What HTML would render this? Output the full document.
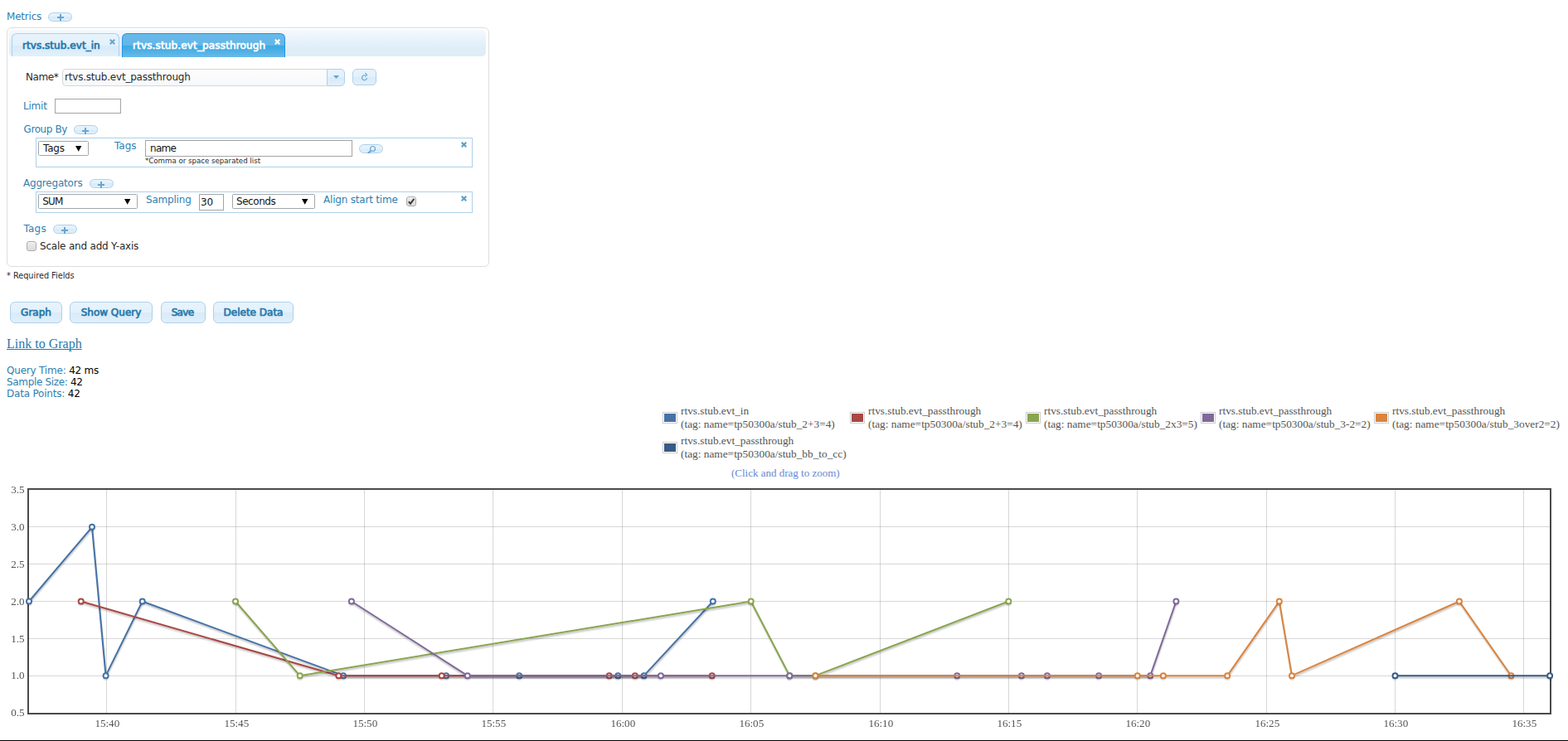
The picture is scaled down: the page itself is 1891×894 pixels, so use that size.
<!DOCTYPE html>
<html lang="en">
<head>
<meta charset="utf-8">
<title>KairosDB</title>
<style>
html,body{margin:0;padding:0;background:#fff;}
body{width:1891px;height:894px;position:relative;overflow:hidden;font-family:"DejaVu Sans","Liberation Sans",sans-serif;font-size:12px;letter-spacing:-0.2px;line-height:14px;color:#222;}
.a{position:absolute;white-space:nowrap;}
.lb{color:#2f7fb0;}
.dk{color:#2a2a2a;}
.b{font-family:"DejaVu Sans","Liberation Sans",sans-serif;font-weight:normal;font-size:12px;letter-spacing:0;-webkit-text-stroke:0.7px currentColor;}
.panel{position:absolute;left:8px;top:33px;width:580px;height:287px;border:1px solid #ddd;border-radius:6px;background:#fff;}
.tabnav{position:absolute;left:11px;top:36px;width:575px;height:32px;border-radius:5px;background:linear-gradient(#f4f9fd 0%,#e6f1fa 45%,#deedf7 75%,#deedf7 100%);}
.tab{position:absolute;top:40px;height:27px;border:1px solid #aed0ea;border-bottom:0;border-radius:6px 6px 0 0;background:linear-gradient(#e7f3fc 0,#e3f1fb 50%,#d9ebf9 50%,#dbecf9 70%,#e2f0fa 100%);color:#2779aa;}
.tab.on{border-color:#2694e8;background:linear-gradient(#69b9e9 0,#64b6e8 50%,#3ba9e2 50%,#42ace3 62%,#6abae9 100%);color:#fff;height:28px;}
.tab span{position:absolute;top:7px;font-size:12px;letter-spacing:0.15px;}
.pill{position:absolute;width:27px;height:9px;border:1px solid #aed0ea;border-radius:6px;background:linear-gradient(#e7f3fc 0,#e3f1fb 50%,#d9ebf9 50%,#dbecf9 70%,#e2f0fa 100%);}
.pill svg{position:absolute;left:0;top:0;}
.btn{position:absolute;top:364px;height:24px;border:1px solid #aed0ea;border-radius:6px;background:linear-gradient(#e7f3fc 0,#e3f1fb 50%,#d9ebf9 50%,#dbecf9 70%,#e2f0fa 100%);color:#2779aa;text-align:center;line-height:24px;}
.box{position:absolute;left:43px;width:525px;border:1px solid #aed0ea;background:#fff;}
.inp{position:absolute;border:1px solid #a4a4a4;background:#fff;box-sizing:border-box;color:#141414;}
.sel{position:absolute;border-radius:1.5px;border:1px solid #a6a6a6;background:#fff;box-sizing:border-box;color:#141414;height:18px;}
.cb{position:absolute;width:10px;height:10px;border:1px solid #ababab;border-radius:3px;background:linear-gradient(#ebebeb,#dddddd);box-shadow:inset 0 1px 0 rgba(255,255,255,.6);}
.lg{letter-spacing:0;position:absolute;font-family:"Liberation Serif","DejaVu Serif",serif;font-size:13.33px;line-height:16px;color:#545454;white-space:nowrap;}
.sw{position:absolute;width:14px;height:10px;padding:1px;border:1px solid #ccc;background:#fff;}
.sw b{display:block;width:14px;height:10px;}
#chart{position:absolute;left:0;top:580px;will-change:transform;}
#chart text{letter-spacing:0;font-family:"Liberation Serif","DejaVu Serif",serif;font-size:13.1px;fill:#545454;}
</style>
</head>
<body>

<!-- Metrics header -->
<span class="a lb" style="left:8px;top:13px;">Metrics</span>
<div class="pill" style="left:58px;top:15px;"><svg width="27" height="9" viewBox="0 0 27 9"><path d="M10 4h8v2h-8z M13 1h2v8h-2z" fill="#68a6d1"/></svg></div>

<!-- Tabs panel -->
<div class="panel"></div>
<div class="tabnav"></div>
<div class="tab" style="left:14px;width:128px;"><span class="b" style="left:12px;letter-spacing:0.05px;">rtvs.stub.evt_in</span>
 <svg class="a" style="left:117px;top:6px;" width="7" height="7" viewBox="0 0 7 7"><path d="M1.5 0 3.5 2 5.5 0 7 1.5 5 3.5 7 5.5 5.5 7 3.5 5 1.5 7 0 5.5 2 3.5 0 1.5z" fill="#6aa6cf"/></svg></div>
<div class="tab on" style="left:147px;width:195px;"><span class="b" style="left:12px;">rtvs.stub.evt_passthrough</span>
 <svg class="a" style="left:183px;top:6px;" width="7" height="7" viewBox="0 0 7 7"><path d="M1.5 0 3.5 2 5.5 0 7 1.5 5 3.5 7 5.5 5.5 7 3.5 5 1.5 7 0 5.5 2 3.5 0 1.5z" fill="#fff"/></svg></div>

<!-- Name row -->
<span class="a dk" style="left:31px;top:86px;letter-spacing:-0.4px;">Name*</span>
<div class="a" style="left:75px;top:83px;width:318px;height:19px;border:1px solid #d6d6d6;border-right:0;border-radius:5px 0 0 5px;background:linear-gradient(#fdfdfe,#f6f8fa);"><span class="a dk" style="left:2px;top:2px;">rtvs.stub.evt_passthrough</span></div>
<div class="a" style="left:394px;top:83px;width:20px;height:19px;border:1px solid #aed0ea;border-radius:0 5px 5px 0;background:linear-gradient(#e7f3fc 0,#e3f1fb 50%,#d9ebf9 50%,#dbecf9 70%,#e2f0fa 100%);"><svg class="a" style="left:7px;top:7px;" width="7" height="4" viewBox="0 0 7 4"><path d="M0 0h7L3.5 4z" fill="#62a5d0"/></svg></div>
<div class="a" style="left:425px;top:83px;width:27px;height:18px;border:1px solid #aed0ea;border-radius:5px;background:linear-gradient(#e7f3fc 0,#e3f1fb 50%,#d9ebf9 50%,#dbecf9 70%,#e2f0fa 100%);"><svg class="a" style="left:9px;top:3px;" width="9" height="11" viewBox="0 0 9 11"><path d="M5.2 3.8A3 3 0 1 0 7.5 7.2" fill="none" stroke="#62a5d0" stroke-width="1.1"/><path d="M5.2 1.2 7.6 3.4 5 5.4" fill="none" stroke="#62a5d0" stroke-width="1.1"/></svg></div>

<!-- Limit -->
<span class="a lb" style="left:28px;top:121px;">Limit</span>
<div class="inp" style="left:66px;top:119px;width:80px;height:18px;"></div>

<!-- Group by -->
<span class="a lb" style="left:28.5px;top:149px;letter-spacing:-0.4px;">Group By</span>
<div class="pill" style="left:89px;top:151px;"><svg width="27" height="10" viewBox="0 0 27 10"><path d="M9 5h8v2h-8z M12 2h2v8h-2z" fill="#68a6d1"/></svg></div>
<div class="box" style="top:166px;height:34px;"></div>
<div class="sel" style="left:46px;top:170px;width:61px;"><span class="a" style="left:5px;top:1px;">Tags</span><svg class="a" style="left:44px;top:5px;" width="8" height="7" viewBox="0 0 8 7"><path d="M0 0h7.4L3.7 6.8z" fill="#000"/></svg></div>
<span class="a lb" style="left:138px;top:169px;letter-spacing:0;">Tags</span>
<div class="inp" style="left:175px;top:169px;width:250px;height:20px;"><span class="a" style="left:5px;top:2px;letter-spacing:-0.7px;">name</span></div>
<span class="a dk" style="left:175px;top:187px;font-size:8.65px;letter-spacing:0;">*Comma or space separated list</span>
<div class="pill" style="left:433px;top:174px;"><svg width="27" height="10" viewBox="0 0 27 10"><circle cx="15.5" cy="4.5" r="3" fill="none" stroke="#62a5d0" stroke-width="1.1"/><path d="M13 7 9.6 10.4" stroke="#62a5d0" stroke-width="2" fill="none"/></svg></div>
<svg class="a" style="left:556px;top:171px;" width="7" height="7" viewBox="0 0 7 7"><path d="M1.5 0 3.5 2 5.5 0 7 1.5 5 3.5 7 5.5 5.5 7 3.5 5 1.5 7 0 5.5 2 3.5 0 1.5z" fill="#5b9fc9"/></svg>

<!-- Aggregators -->
<span class="a lb" style="left:28px;top:214px;">Aggregators</span>
<div class="pill" style="left:108px;top:216px;"><svg width="27" height="10" viewBox="0 0 27 10"><path d="M9 5h8v2h-8z M12 2h2v8h-2z" fill="#68a6d1"/></svg></div>
<div class="box" style="top:231px;height:24px;"></div>
<div class="sel" style="left:46px;top:234px;width:120px;"><span class="a" style="left:4.3px;top:1px;letter-spacing:-0.8px;">SUM</span><svg class="a" style="left:103px;top:5px;" width="8" height="7" viewBox="0 0 8 7"><path d="M0 0h7.4L3.7 6.8z" fill="#000"/></svg></div>
<span class="a lb" style="left:176px;top:234px;">Sampling</span>
<div class="inp" style="left:240px;top:234px;width:30px;height:20px;"><span class="a" style="left:1px;top:2px;">30</span></div>
<div class="sel" style="left:280px;top:234px;width:100px;"><span class="a" style="left:4px;top:1px;letter-spacing:-0.45px;">Seconds</span><svg class="a" style="left:83px;top:5px;" width="8" height="7" viewBox="0 0 8 7"><path d="M0 0h7.4L3.7 6.8z" fill="#000"/></svg></div>
<span class="a lb" style="left:390px;top:234px;">Align start time</span>
<div class="cb" style="left:490px;top:237px;"><svg class="a" style="left:0;top:0;" width="10" height="10" viewBox="0 0 10 10"><path d="M1.8 5.2 4 7.6 8.4 1.8" fill="none" stroke="#3c3c3c" stroke-width="2"/></svg></div>
<svg class="a" style="left:556px;top:236px;" width="7" height="7" viewBox="0 0 7 7"><path d="M1.5 0 3.5 2 5.5 0 7 1.5 5 3.5 7 5.5 5.5 7 3.5 5 1.5 7 0 5.5 2 3.5 0 1.5z" fill="#5b9fc9"/></svg>

<!-- Tags -->
<span class="a lb" style="left:28.5px;top:269px;letter-spacing:0.2px;">Tags</span>
<div class="pill" style="left:64px;top:271px;"><svg width="27" height="10" viewBox="0 0 27 10"><path d="M9 5h8v2h-8z M12 2h2v8h-2z" fill="#68a6d1"/></svg></div>
<div class="cb" style="left:32px;top:291px;"></div>
<span class="a dk" style="left:48px;top:290px;">Scale and add Y-axis</span>

<span class="a dk" style="left:8px;top:326px;font-size:9.7px;letter-spacing:0;">* Required Fields</span>

<!-- Buttons -->
<div class="btn b" style="left:12px;width:61px;">Graph</div>
<div class="btn b" style="left:84px;width:98px;">Show Query</div>
<div class="btn b" style="left:194px;width:50px;padding-right:2px;letter-spacing:-0.7px;">Save</div>
<div class="btn b" style="left:257px;width:95px;">Delete Data</div>

<a class="a" style="left:8px;top:406px;font-family:'Liberation Serif','DejaVu Serif',serif;font-size:16px;letter-spacing:0;line-height:18px;color:#2779aa;text-decoration:underline;text-underline-offset:1px;text-decoration-skip-ink:none;text-decoration-thickness:1px;">Link to Graph</a>

<span class="a" style="left:8px;top:440px;"><span class="lb">Query Time:</span> <span style="color:#000">42 ms</span></span>
<span class="a" style="left:8px;top:454px;letter-spacing:-0.34px;"><span class="lb">Sample Size:</span> <span style="color:#000">42</span></span>
<span class="a" style="left:8px;top:468px;"><span class="lb">Data Points:</span> <span style="color:#000">42</span></span>

<!-- Legend -->
<div class="sw" style="left:799px;top:497px;"><b style="background:#4572a7"></b></div>
<div class="lg" style="left:821px;top:488px;">rtvs.stub.evt_in<br>(tag: name=tp50300a/stub_2+3=4)</div>
<div class="sw" style="left:1025px;top:497px;"><b style="background:#aa4643"></b></div>
<div class="lg" style="left:1047px;top:488px;">rtvs.stub.evt_passthrough<br>(tag: name=tp50300a/stub_2+3=4)</div>
<div class="sw" style="left:1237px;top:497px;"><b style="background:#89a54e"></b></div>
<div class="lg" style="left:1259px;top:488px;">rtvs.stub.evt_passthrough<br>(tag: name=tp50300a/stub_2x3=5)</div>
<div class="sw" style="left:1448px;top:497px;"><b style="background:#80699b"></b></div>
<div class="lg" style="left:1470px;top:488px;">rtvs.stub.evt_passthrough<br>(tag: name=tp50300a/stub_3-2=2)</div>
<div class="sw" style="left:1657px;top:497px;"><b style="background:#db843d"></b></div>
<div class="lg" style="left:1679px;top:488px;">rtvs.stub.evt_passthrough<br>(tag: name=tp50300a/stub_3over2=2)</div>
<div class="sw" style="left:799px;top:533px;"><b style="background:#375b86"></b></div>
<div class="lg" style="left:821px;top:524px;">rtvs.stub.evt_passthrough<br>(tag: name=tp50300a/stub_bb_to_cc)</div>
<span class="a" style="left:882px;top:563px;font-family:'Liberation Serif','DejaVu Serif',serif;font-size:13px;letter-spacing:0;line-height:16px;color:#6688d0;">(Click and drag to zoom)</span>

<!-- Chart -->
<svg id="chart" width="1891" height="313" viewBox="0 580 1891 313">
<g fill="none" stroke="#545454" stroke-opacity="0.23" stroke-width="1" shape-rendering="crispEdges">
<path d="M128.5 591 V860"/>
<path d="M284.5 591 V860"/>
<path d="M439.5 591 V860"/>
<path d="M594.5 591 V860"/>
<path d="M750.5 591 V860"/>
<path d="M905.5 591 V860"/>
<path d="M1061.5 591 V860"/>
<path d="M1216.5 591 V860"/>
<path d="M1371.5 591 V860"/>
<path d="M1527.5 591 V860"/>
<path d="M1682.5 591 V860"/>
<path d="M1837.5 591 V860"/>
<path d="M35 635.5 H1869"/>
<path d="M35 680.5 H1869"/>
<path d="M35 725.5 H1869"/>
<path d="M35 770.5 H1869"/>
<path d="M35 815.5 H1869"/>
</g>
<rect x="34" y="590" width="1836" height="271" fill="none" stroke="#4a4a4a" stroke-width="2" shape-rendering="crispEdges"/>
<text x="129.3" y="877" text-anchor="middle">15:40</text>
<text x="285.3" y="877" text-anchor="middle">15:45</text>
<text x="440.3" y="877" text-anchor="middle">15:50</text>
<text x="595.3" y="877" text-anchor="middle">15:55</text>
<text x="751.3" y="877" text-anchor="middle">16:00</text>
<text x="906.3" y="877" text-anchor="middle">16:05</text>
<text x="1062.3" y="877" text-anchor="middle">16:10</text>
<text x="1217.3" y="877" text-anchor="middle">16:15</text>
<text x="1372.3" y="877" text-anchor="middle">16:20</text>
<text x="1528.3" y="877" text-anchor="middle">16:25</text>
<text x="1683.3" y="877" text-anchor="middle">16:30</text>
<text x="1838.3" y="877" text-anchor="middle">16:35</text>
<text x="29.5" y="595.2" text-anchor="end">3.5</text>
<text x="29.5" y="640.0" text-anchor="end">3.0</text>
<text x="29.5" y="684.9" text-anchor="end">2.5</text>
<text x="29.5" y="729.7" text-anchor="end">2.0</text>
<text x="29.5" y="774.5" text-anchor="end">1.5</text>
<text x="29.5" y="819.4" text-anchor="end">1.0</text>
<text x="29.5" y="864.2" text-anchor="end">0.5</text>
<g fill="none" stroke-linejoin="round">
<path d="M35.43 727.96 L111.43 638.30 L128.03 817.63 L172.13 727.96 L414.43 817.63 L538.53 817.63 L626.63 817.63 L745.73 817.63 L777.03 817.63 L860.23 727.96" stroke="#000" stroke-opacity="0.1" stroke-width="3"/>
<path d="M35.30 727.22 L111.30 637.56 L127.90 816.89 L172.00 727.22 L414.30 816.89 L538.40 816.89 L626.50 816.89 L745.60 816.89 L776.90 816.89 L860.10 727.22" stroke="#000" stroke-opacity="0.1" stroke-width="1.5"/>
<path d="M35.00 725.50 L111.00 635.83 L127.60 815.17 L171.70 725.50 L414.00 815.17 L538.10 815.17 L626.20 815.17 L745.30 815.17 L776.60 815.17 L859.80 725.50" stroke="#4572a7" stroke-width="2"/>
<path d="M38.00 727.75 A3 3 0 0 1 32.00 727.75 M114.00 638.08 A3 3 0 0 1 108.00 638.08 M130.60 817.42 A3 3 0 0 1 124.60 817.42 M174.70 727.75 A3 3 0 0 1 168.70 727.75 M417.00 817.42 A3 3 0 0 1 411.00 817.42 M541.10 817.42 A3 3 0 0 1 535.10 817.42 M629.20 817.42 A3 3 0 0 1 623.20 817.42 M748.30 817.42 A3 3 0 0 1 742.30 817.42 M779.60 817.42 A3 3 0 0 1 773.60 817.42 M862.80 727.75 A3 3 0 0 1 856.80 727.75" stroke="#000" stroke-opacity="0.1" stroke-width="1.5"/>
<path d="M38.00 726.25 A3 3 0 0 1 32.00 726.25 M114.00 636.58 A3 3 0 0 1 108.00 636.58 M130.60 815.92 A3 3 0 0 1 124.60 815.92 M174.70 726.25 A3 3 0 0 1 168.70 726.25 M417.00 815.92 A3 3 0 0 1 411.00 815.92 M541.10 815.92 A3 3 0 0 1 535.10 815.92 M629.20 815.92 A3 3 0 0 1 623.20 815.92 M748.30 815.92 A3 3 0 0 1 742.30 815.92 M779.60 815.92 A3 3 0 0 1 773.60 815.92 M862.80 726.25 A3 3 0 0 1 856.80 726.25" stroke="#000" stroke-opacity="0.2" stroke-width="1.5"/>
</g>
<g fill="#fff" stroke="#4572a7" stroke-width="2">
<circle cx="35.00" cy="725.50" r="3"/>
<circle cx="111.00" cy="635.83" r="3"/>
<circle cx="127.60" cy="815.17" r="3"/>
<circle cx="171.70" cy="725.50" r="3"/>
<circle cx="414.00" cy="815.17" r="3"/>
<circle cx="538.10" cy="815.17" r="3"/>
<circle cx="626.20" cy="815.17" r="3"/>
<circle cx="745.30" cy="815.17" r="3"/>
<circle cx="776.60" cy="815.17" r="3"/>
<circle cx="859.80" cy="725.50" r="3"/>
</g>
<g fill="none" stroke-linejoin="round">
<path d="M98.13 727.96 L408.83 817.63 L533.13 817.63 L735.13 817.63 L766.23 817.63 L859.13 817.63" stroke="#000" stroke-opacity="0.1" stroke-width="3"/>
<path d="M98.00 727.22 L408.70 816.89 L533.00 816.89 L735.00 816.89 L766.10 816.89 L859.00 816.89" stroke="#000" stroke-opacity="0.1" stroke-width="1.5"/>
<path d="M97.70 725.50 L408.40 815.17 L532.70 815.17 L734.70 815.17 L765.80 815.17 L858.70 815.17" stroke="#aa4643" stroke-width="2"/>
<path d="M100.70 727.75 A3 3 0 0 1 94.70 727.75 M411.40 817.42 A3 3 0 0 1 405.40 817.42 M535.70 817.42 A3 3 0 0 1 529.70 817.42 M737.70 817.42 A3 3 0 0 1 731.70 817.42 M768.80 817.42 A3 3 0 0 1 762.80 817.42 M861.70 817.42 A3 3 0 0 1 855.70 817.42" stroke="#000" stroke-opacity="0.1" stroke-width="1.5"/>
<path d="M100.70 726.25 A3 3 0 0 1 94.70 726.25 M411.40 815.92 A3 3 0 0 1 405.40 815.92 M535.70 815.92 A3 3 0 0 1 529.70 815.92 M737.70 815.92 A3 3 0 0 1 731.70 815.92 M768.80 815.92 A3 3 0 0 1 762.80 815.92 M861.70 815.92 A3 3 0 0 1 855.70 815.92" stroke="#000" stroke-opacity="0.2" stroke-width="1.5"/>
</g>
<g fill="#fff" stroke="#aa4643" stroke-width="2">
<circle cx="97.70" cy="725.50" r="3"/>
<circle cx="408.40" cy="815.17" r="3"/>
<circle cx="532.70" cy="815.17" r="3"/>
<circle cx="734.70" cy="815.17" r="3"/>
<circle cx="765.80" cy="815.17" r="3"/>
<circle cx="858.70" cy="815.17" r="3"/>
</g>
<g fill="none" stroke-linejoin="round">
<path d="M284.43 727.96 L362.13 817.63 L906.13 727.96 L952.73 817.63 L983.83 817.63 L1216.73 727.96" stroke="#000" stroke-opacity="0.1" stroke-width="3"/>
<path d="M284.30 727.22 L362.00 816.89 L906.00 727.22 L952.60 816.89 L983.70 816.89 L1216.60 727.22" stroke="#000" stroke-opacity="0.1" stroke-width="1.5"/>
<path d="M284.00 725.50 L361.70 815.17 L905.70 725.50 L952.30 815.17 L983.40 815.17 L1216.30 725.50" stroke="#89a54e" stroke-width="2"/>
<path d="M287.00 727.75 A3 3 0 0 1 281.00 727.75 M364.70 817.42 A3 3 0 0 1 358.70 817.42 M908.70 727.75 A3 3 0 0 1 902.70 727.75 M955.30 817.42 A3 3 0 0 1 949.30 817.42 M986.40 817.42 A3 3 0 0 1 980.40 817.42 M1219.30 727.75 A3 3 0 0 1 1213.30 727.75" stroke="#000" stroke-opacity="0.1" stroke-width="1.5"/>
<path d="M287.00 726.25 A3 3 0 0 1 281.00 726.25 M364.70 815.92 A3 3 0 0 1 358.70 815.92 M908.70 726.25 A3 3 0 0 1 902.70 726.25 M955.30 815.92 A3 3 0 0 1 949.30 815.92 M986.40 815.92 A3 3 0 0 1 980.40 815.92 M1219.30 726.25 A3 3 0 0 1 1213.30 726.25" stroke="#000" stroke-opacity="0.2" stroke-width="1.5"/>
</g>
<g fill="#fff" stroke="#89a54e" stroke-width="2">
<circle cx="284.00" cy="725.50" r="3"/>
<circle cx="361.70" cy="815.17" r="3"/>
<circle cx="905.70" cy="725.50" r="3"/>
<circle cx="952.30" cy="815.17" r="3"/>
<circle cx="983.40" cy="815.17" r="3"/>
<circle cx="1216.30" cy="725.50" r="3"/>
</g>
<g fill="none" stroke-linejoin="round">
<path d="M424.33 727.96 L564.23 817.63 L797.33 817.63 L952.73 817.63 L1154.63 817.63 L1232.33 817.63 L1263.33 817.63 L1325.53 817.63 L1387.73 817.63 L1418.83 727.96" stroke="#000" stroke-opacity="0.1" stroke-width="3"/>
<path d="M424.20 727.22 L564.10 816.89 L797.20 816.89 L952.60 816.89 L1154.50 816.89 L1232.20 816.89 L1263.20 816.89 L1325.40 816.89 L1387.60 816.89 L1418.70 727.22" stroke="#000" stroke-opacity="0.1" stroke-width="1.5"/>
<path d="M423.90 725.50 L563.80 815.17 L796.90 815.17 L952.30 815.17 L1154.20 815.17 L1231.90 815.17 L1262.90 815.17 L1325.10 815.17 L1387.30 815.17 L1418.40 725.50" stroke="#80699b" stroke-width="2"/>
<path d="M426.90 727.75 A3 3 0 0 1 420.90 727.75 M566.80 817.42 A3 3 0 0 1 560.80 817.42 M799.90 817.42 A3 3 0 0 1 793.90 817.42 M955.30 817.42 A3 3 0 0 1 949.30 817.42 M1157.20 817.42 A3 3 0 0 1 1151.20 817.42 M1234.90 817.42 A3 3 0 0 1 1228.90 817.42 M1265.90 817.42 A3 3 0 0 1 1259.90 817.42 M1328.10 817.42 A3 3 0 0 1 1322.10 817.42 M1390.30 817.42 A3 3 0 0 1 1384.30 817.42 M1421.40 727.75 A3 3 0 0 1 1415.40 727.75" stroke="#000" stroke-opacity="0.1" stroke-width="1.5"/>
<path d="M426.90 726.25 A3 3 0 0 1 420.90 726.25 M566.80 815.92 A3 3 0 0 1 560.80 815.92 M799.90 815.92 A3 3 0 0 1 793.90 815.92 M955.30 815.92 A3 3 0 0 1 949.30 815.92 M1157.20 815.92 A3 3 0 0 1 1151.20 815.92 M1234.90 815.92 A3 3 0 0 1 1228.90 815.92 M1265.90 815.92 A3 3 0 0 1 1259.90 815.92 M1328.10 815.92 A3 3 0 0 1 1322.10 815.92 M1390.30 815.92 A3 3 0 0 1 1384.30 815.92 M1421.40 726.25 A3 3 0 0 1 1415.40 726.25" stroke="#000" stroke-opacity="0.2" stroke-width="1.5"/>
</g>
<g fill="#fff" stroke="#80699b" stroke-width="2">
<circle cx="423.90" cy="725.50" r="3"/>
<circle cx="563.80" cy="815.17" r="3"/>
<circle cx="796.90" cy="815.17" r="3"/>
<circle cx="952.30" cy="815.17" r="3"/>
<circle cx="1154.20" cy="815.17" r="3"/>
<circle cx="1231.90" cy="815.17" r="3"/>
<circle cx="1262.90" cy="815.17" r="3"/>
<circle cx="1325.10" cy="815.17" r="3"/>
<circle cx="1387.30" cy="815.17" r="3"/>
<circle cx="1418.40" cy="725.50" r="3"/>
</g>
<g fill="none" stroke-linejoin="round">
<path d="M983.83 817.63 L1372.23 817.63 L1403.33 817.63 L1480.63 817.63 L1543.23 727.96 L1558.43 817.63 L1760.33 727.96 L1822.83 817.63" stroke="#000" stroke-opacity="0.1" stroke-width="3"/>
<path d="M983.70 816.89 L1372.10 816.89 L1403.20 816.89 L1480.50 816.89 L1543.10 727.22 L1558.30 816.89 L1760.20 727.22 L1822.70 816.89" stroke="#000" stroke-opacity="0.1" stroke-width="1.5"/>
<path d="M983.40 815.17 L1371.80 815.17 L1402.90 815.17 L1480.20 815.17 L1542.80 725.50 L1558.00 815.17 L1759.90 725.50 L1822.40 815.17" stroke="#db843d" stroke-width="2"/>
<path d="M986.40 817.42 A3 3 0 0 1 980.40 817.42 M1374.80 817.42 A3 3 0 0 1 1368.80 817.42 M1405.90 817.42 A3 3 0 0 1 1399.90 817.42 M1483.20 817.42 A3 3 0 0 1 1477.20 817.42 M1545.80 727.75 A3 3 0 0 1 1539.80 727.75 M1561.00 817.42 A3 3 0 0 1 1555.00 817.42 M1762.90 727.75 A3 3 0 0 1 1756.90 727.75 M1825.40 817.42 A3 3 0 0 1 1819.40 817.42" stroke="#000" stroke-opacity="0.1" stroke-width="1.5"/>
<path d="M986.40 815.92 A3 3 0 0 1 980.40 815.92 M1374.80 815.92 A3 3 0 0 1 1368.80 815.92 M1405.90 815.92 A3 3 0 0 1 1399.90 815.92 M1483.20 815.92 A3 3 0 0 1 1477.20 815.92 M1545.80 726.25 A3 3 0 0 1 1539.80 726.25 M1561.00 815.92 A3 3 0 0 1 1555.00 815.92 M1762.90 726.25 A3 3 0 0 1 1756.90 726.25 M1825.40 815.92 A3 3 0 0 1 1819.40 815.92" stroke="#000" stroke-opacity="0.2" stroke-width="1.5"/>
</g>
<g fill="#fff" stroke="#db843d" stroke-width="2">
<circle cx="983.40" cy="815.17" r="3"/>
<circle cx="1371.80" cy="815.17" r="3"/>
<circle cx="1402.90" cy="815.17" r="3"/>
<circle cx="1480.20" cy="815.17" r="3"/>
<circle cx="1542.80" cy="725.50" r="3"/>
<circle cx="1558.00" cy="815.17" r="3"/>
<circle cx="1759.90" cy="725.50" r="3"/>
<circle cx="1822.40" cy="815.17" r="3"/>
</g>
<g fill="none" stroke-linejoin="round">
<path d="M1682.93 817.63 L1869.53 817.63" stroke="#000" stroke-opacity="0.1" stroke-width="3"/>
<path d="M1682.80 816.89 L1869.40 816.89" stroke="#000" stroke-opacity="0.1" stroke-width="1.5"/>
<path d="M1682.50 815.17 L1869.10 815.17" stroke="#375b86" stroke-width="2"/>
<path d="M1685.50 817.42 A3 3 0 0 1 1679.50 817.42 M1872.10 817.42 A3 3 0 0 1 1866.10 817.42" stroke="#000" stroke-opacity="0.1" stroke-width="1.5"/>
<path d="M1685.50 815.92 A3 3 0 0 1 1679.50 815.92 M1872.10 815.92 A3 3 0 0 1 1866.10 815.92" stroke="#000" stroke-opacity="0.2" stroke-width="1.5"/>
</g>
<g fill="#fff" stroke="#375b86" stroke-width="2">
<circle cx="1682.50" cy="815.17" r="3"/>
<circle cx="1869.10" cy="815.17" r="3"/>
</g>
</svg>

<div class="a" style="left:0;top:893px;width:1891px;height:1px;background:#000;"></div>
</body>
</html>
